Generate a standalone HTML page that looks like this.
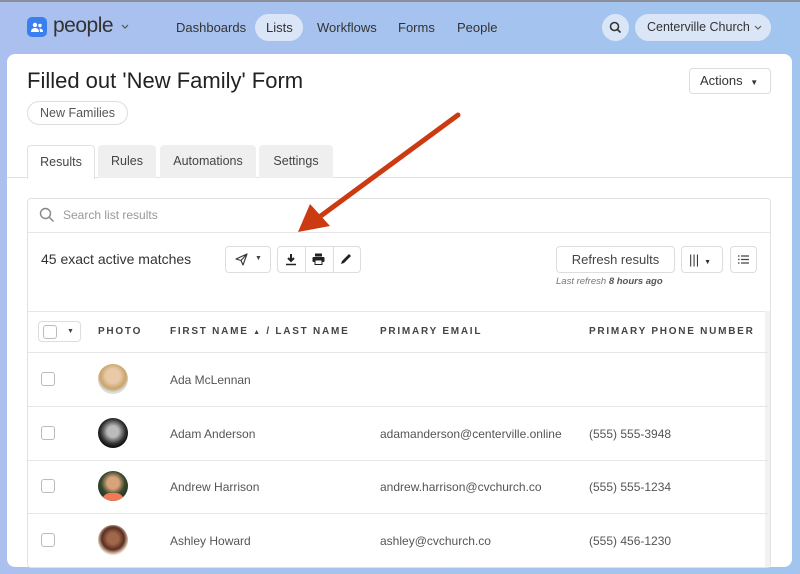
<!DOCTYPE html>
<html><head><style>
*{box-sizing:border-box;margin:0;padding:0}
body{width:800px;height:574px;overflow:hidden;font-family:"Liberation Sans",sans-serif;background:linear-gradient(90deg,#abc0ef,#a1c5ef);position:relative;color:#333}
.a{position:absolute}
.nav{font-size:13px;color:#333;top:20px}
.card{left:7px;top:54px;width:785px;height:513px;background:#fff;border-radius:8px}
.tab{top:145px;height:33px;border-radius:4px 4px 0 0;background:#efefef;font-size:12.5px;color:#444;text-align:center;line-height:33px}
.btn{border:1px solid #ddd;border-radius:4px;background:#fff}
.th{top:326px;font-size:10px;font-weight:bold;letter-spacing:1.75px;color:#444}
.row{left:28px;width:740px;height:1px;background:#e6e6e6}
.cb{left:41px;width:14px;height:14px;border:1px solid #bbb;border-radius:3px}
.av{left:98px;width:30px;height:30px;border-radius:50%}
.td{font-size:12px;color:#555}
</style></head><body>
<div class="a" style="left:0;top:0;width:800px;height:2px;background:#8a8f9a"></div>
<div class="a" style="left:27px;top:17px;width:20px;height:20px;border-radius:5px;background:#3a7ff0"></div>
<svg class="a" style="left:30px;top:21px" width="14" height="12" viewBox="0 0 14 12"><circle cx="5" cy="4" r="2.2" fill="#fff"/><path d="M1 11c0-3 2-4 4-4s4 1 4 4z" fill="#fff"/><circle cx="10" cy="4.5" r="1.7" fill="#fff"/><path d="M9.5 7.5c2 0 3.5 1 3.5 3.5h-3z" fill="#fff"/></svg>
<div class="a" style="left:53px;top:14px;font-size:21px;color:#333;letter-spacing:-0.5px">people</div>
<svg class="a" style="left:121px;top:24px" width="8" height="5" viewBox="0 0 8 5"><path d="M1 1l3 3 3-3" stroke="#555" stroke-width="1.2" fill="none"/></svg>
<div class="a nav" style="left:176px">Dashboards</div>
<div class="a" style="left:255px;top:14px;width:48px;height:27px;border-radius:14px;background:#dae6f8"></div>
<div class="a nav" style="left:266px">Lists</div>
<div class="a nav" style="left:317px">Workflows</div>
<div class="a nav" style="left:398px">Forms</div>
<div class="a nav" style="left:457px">People</div>
<div class="a" style="left:602px;top:14px;width:27px;height:27px;border-radius:50%;background:#dae6f8"></div>
<svg class="a" style="left:609px;top:21px" width="13" height="13" viewBox="0 0 13 13"><circle cx="5.5" cy="5.5" r="4" fill="none" stroke="#333" stroke-width="1.6"/><path d="M8.5 8.5l3 3" stroke="#333" stroke-width="1.6"/></svg>
<div class="a" style="left:635px;top:14px;width:136px;height:27px;border-radius:14px;background:#dae6f8"></div>
<div class="a nav" style="left:647px;top:20px;font-size:12.5px">Centerville Church</div>
<svg class="a" style="left:754px;top:25px" width="8" height="5" viewBox="0 0 8 5"><path d="M1 1l3 3 3-3" stroke="#555" stroke-width="1.1" fill="none"/></svg>

<div class="a card"></div>
<div class="a" style="left:27px;top:68px;font-size:22px;color:#222">Filled out 'New Family' Form</div>
<div class="a" style="left:27px;top:101px;width:101px;height:24px;border:1px solid #ddd;border-radius:12px;font-size:12.5px;color:#555;text-align:center;line-height:22px">New Families</div>
<div class="a btn" style="left:689px;top:68px;width:82px;height:26px;font-size:13px;color:#333;line-height:24px;padding-left:10px">Actions <span style="font-size:8px;margin-left:4px">▼</span></div>

<div class="a" style="left:7px;top:177px;width:785px;height:1px;background:#e2e2e2"></div>
<div class="a tab" style="left:27px;width:68px;background:#fff;border:1px solid #e2e2e2;border-bottom:none;height:34px;line-height:32px">Results</div>
<div class="a tab" style="left:98px;width:58px">Rules</div>
<div class="a tab" style="left:160px;width:96px">Automations</div>
<div class="a tab" style="left:259px;width:74px">Settings</div>

<div class="a" style="left:27px;top:198px;width:744px;height:370px;border:1px solid #e2e2e2;border-radius:4px"></div>
<svg class="a" style="left:39px;top:207px" width="16" height="16" viewBox="0 0 16 16"><circle cx="6.5" cy="6.5" r="5" fill="none" stroke="#888" stroke-width="1.4"/><path d="M10 10l4.5 4.5" stroke="#888" stroke-width="1.5"/></svg>
<div class="a" style="left:63px;top:208px;font-size:12px;color:#999">Search list results</div>
<div class="a row" style="top:232px;width:742px"></div>
<div class="a" style="left:41px;top:251px;font-size:14px;color:#333">45 exact active matches</div>
<div class="a btn" style="left:225px;top:246px;width:46px;height:27px"></div>
<svg class="a" style="left:235px;top:253px" width="13" height="13" viewBox="0 0 13 13"><path d="M1 6l11-5-4 11-2-4.5z M6 7.5L12 1" stroke="#333" stroke-width="1.1" fill="none" stroke-linejoin="round"/></svg>
<div class="a" style="left:255px;top:255px;font-size:7px;color:#444">▼</div>
<div class="a btn" style="left:277px;top:246px;width:84px;height:27px"></div>
<div class="a" style="left:305px;top:246px;width:1px;height:27px;background:#ddd"></div>
<div class="a" style="left:333px;top:246px;width:1px;height:27px;background:#ddd"></div>
<svg class="a" style="left:285px;top:253px" width="12" height="13" viewBox="0 0 12 13"><path d="M6 1v7M3 5l3 3 3-3" stroke="#222" stroke-width="2" fill="none"/><path d="M1 11.5h10" stroke="#222" stroke-width="1.5"/></svg>
<svg class="a" style="left:312px;top:253px" width="13" height="12" viewBox="0 0 13 12"><rect x="3" y="0.5" width="7" height="3" fill="#222"/><rect x="0.5" y="4" width="12" height="5" rx="1" fill="#222"/><rect x="3" y="7" width="7" height="4.5" fill="#fff" stroke="#222"/></svg>
<svg class="a" style="left:340px;top:253px" width="12" height="12" viewBox="0 0 12 12"><path d="M1 11l1-3 7-7 2 2-7 7z" fill="#222"/></svg>
<div class="a btn" style="left:556px;top:246px;width:119px;height:27px;font-size:13px;color:#444;text-align:center;line-height:25px">Refresh results</div>
<div class="a" style="left:556px;top:276px;font-size:9.5px;font-style:italic;color:#777">Last refresh <b style="color:#555">8 hours ago</b></div>
<div class="a btn" style="left:681px;top:246px;width:42px;height:27px;font-size:13px;color:#333;line-height:25px;padding-left:7px">|||<span style="font-size:7px;margin-left:5px">▼</span></div>
<div class="a btn" style="left:730px;top:246px;width:27px;height:27px"></div>
<svg class="a" style="left:738px;top:255px" width="11" height="9" viewBox="0 0 11 9"><path d="M0 1h1.5M3 1h8M0 4.5h1.5M3 4.5h8M0 8h1.5M3 8h8" stroke="#444" stroke-width="1.2"/></svg>

<div class="a row" style="top:311px;width:742px"></div>
<div class="a btn" style="left:38px;top:321px;width:43px;height:21px"></div>
<div class="a cb" style="left:43px;top:325px"></div>
<div class="a" style="left:67px;top:328px;font-size:7px;color:#444">▼</div>
<div class="a th" style="left:98px">PHOTO</div>
<div class="a th" style="left:170px">FIRST NAME <span style="font-size:7px">▲</span> / LAST NAME</div>
<div class="a th" style="left:380px">PRIMARY EMAIL</div>
<div class="a th" style="left:589px">PRIMARY PHONE NUMBER</div>
<div class="a" style="left:765px;top:311px;width:5px;height:256px;background:#f2f2f2"></div>
<div class="a row" style="top:352px"></div>
<div class="a row" style="top:406px"></div>
<div class="a row" style="top:460px"></div>
<div class="a row" style="top:513px"></div>

<div class="a cb" style="top:372px"></div>
<div class="a av" style="top:364px;background:radial-gradient(circle at 50% 40%,#e8c9a8 30%,#c9a36a 55%,#ddd 70%)"></div>
<div class="a td" style="left:170px;top:373px">Ada McLennan</div>

<div class="a cb" style="top:426px"></div>
<div class="a av" style="top:418px;background:radial-gradient(circle at 50% 45%,#bbb 25%,#333 55%,#111 70%)"></div>
<div class="a td" style="left:170px;top:427px">Adam Anderson</div>
<div class="a td" style="left:380px;top:427px">adamanderson@centerville.online</div>
<div class="a td" style="left:589px;top:427px">(555) 555-3948</div>

<div class="a cb" style="top:479px"></div>
<div class="a av" style="top:471px;background:radial-gradient(circle at 50% 40%,#d8a27a 25%,#3a4a2e 50%,#2c3b25 65%);overflow:hidden"><div style="position:absolute;bottom:0;left:4px;width:22px;height:8px;background:#f07a55;border-radius:8px 8px 0 0"></div></div>
<div class="a td" style="left:170px;top:480px">Andrew Harrison</div>
<div class="a td" style="left:380px;top:480px">andrew.harrison@cvchurch.co</div>
<div class="a td" style="left:589px;top:480px">(555) 555-1234</div>

<div class="a cb" style="top:533px"></div>
<div class="a av" style="top:525px;background:radial-gradient(circle at 50% 45%,#a0674a 25%,#5a2e22 50%,#e9d7bf 70%)"></div>
<div class="a td" style="left:170px;top:534px">Ashley Howard</div>
<div class="a td" style="left:380px;top:534px">ashley@cvchurch.co</div>
<div class="a td" style="left:589px;top:534px">(555) 456-1230</div>

<svg class="a" style="left:0;top:0" width="800" height="574"><line x1="458" y1="115" x2="318" y2="218" stroke="#cc3a12" stroke-width="5" stroke-linecap="round"/><polygon points="298,232 310,204 330,226" fill="#cc3a12"/></svg>
</body></html>
